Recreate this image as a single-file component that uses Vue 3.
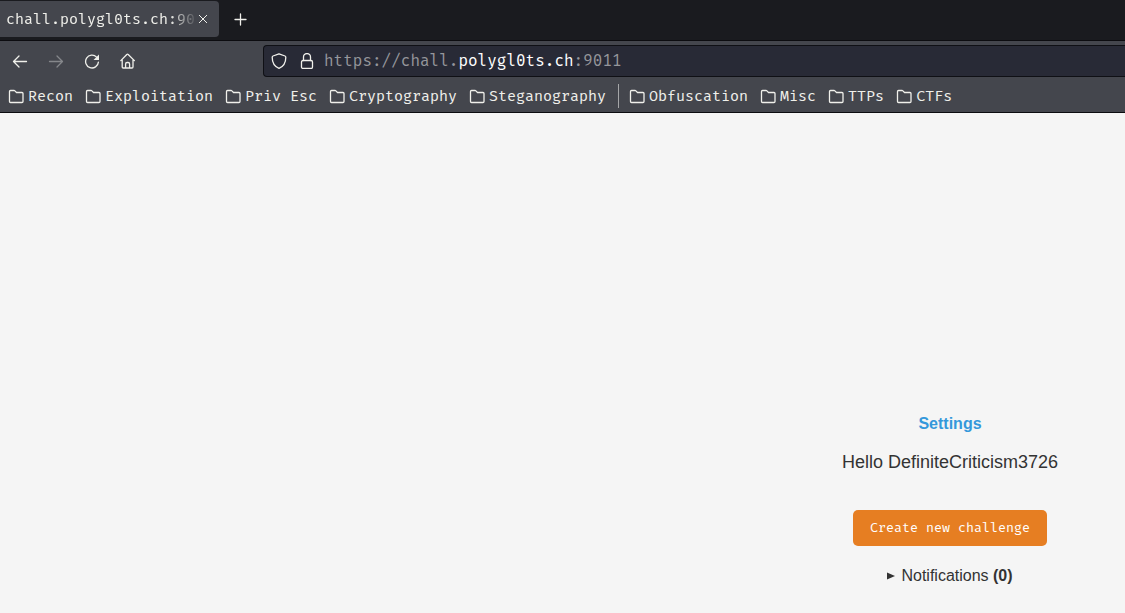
<script setup>
const before = ['Recon', 'Exploitation', 'Priv Esc', 'Cryptography', 'Steganography']
const after = ['Obfuscation', 'Misc', 'TTPs', 'CTFs']
const groups = [before, after]
</script>

<template>
  <div class="browser">
    <header class="chrome">
      <div class="tabs">
        <div class="tab">
          <span class="tab-title">chall.polygl0ts.ch:90</span>
          <button class="close" type="button" aria-label="Close tab">
            <svg width="10" height="10" viewBox="0 0 10 10"><path d="M1 1l8 8M9 1L1 9" /></svg>
          </button>
        </div>
        <button class="icon-button" type="button" aria-label="New tab">
          <svg width="14" height="14" viewBox="0 0 14 14"><path class="bold" d="M6.500 2v11M1 7.500h11" /></svg>
        </button>
      </div>

      <div class="toolbar">
        <nav class="controls" aria-label="Navigation">
          <button class="icon-button" type="button" aria-label="Back">
            <svg width="16" height="16" viewBox="0 0 16 16"><path class="bold" d="M14.500 8.500H1.500M7 3L1.500 8.500L7 14" /></svg>
          </button>
          <button class="icon-button" type="button" aria-label="Forward" disabled>
            <svg width="16" height="16" viewBox="0 0 16 16"><path class="bold" d="M1.500 8.500h13M9 3L14.500 8.500L9 14" /></svg>
          </button>
          <button class="icon-button" type="button" aria-label="Reload">
            <svg width="16" height="16" viewBox="0 0 16 16">
              <path class="bold" d="M12.600 4.100A6.400 6.400 0 1 0 14.400 9.100" />
              <path class="solid" d="M15 1.500v5.500H9.500z" />
            </svg>
          </button>
          <button class="icon-button" type="button" aria-label="Home">
            <svg width="16" height="16" viewBox="0 0 16 16">
              <path class="bold" d="M.8 7.600L6.800 1.500q.7-.6 1.400 0L14.400 7.600M2.200 6.800V14q0 1 1 1h8.800q1 0 1-1V6.800M5.600 15v-4q0-1.500 1.500-1.500h1q1.500 0 1.500 1.500v4" />
            </svg>
          </button>
        </nav>
        <div class="address">
          <div class="identity">
            <svg width="16" height="16" viewBox="0 0 16 16">
              <path class="bold" d="M8 .8L14 3q.8.300.8 1.200C14.800 9.500 12.500 13.500 8 15.300C3.500 13.500 1.200 9.500 1.200 4.200Q1.200 3.300 2 3z" />
            </svg>
            <svg width="16" height="16" viewBox="0 0 16 16">
              <rect class="bold" x="2.500" y="7.500" width="11" height="8" rx="1.500" />
              <path class="bold" d="M4.500 7.500V4a3.500 3.500 0 0 1 7 0v3.500" />
            </svg>
          </div>
          <a class="url" href="https://chall.polygl0ts.ch:9011">https://chall.<span class="domain">polygl0ts.ch</span>:9011</a>
        </div>
      </div>

      <nav class="bookmarks" aria-label="Bookmarks">
        <div v-for="(group, i) in groups" :key="i" class="group">
          <button v-for="name in group" :key="name" class="bookmark" type="button">
            <svg width="16" height="16" viewBox="0 0 16 16">
              <path class="bold" d="M1.500 3.500q0-1 1-1h3.500q.5 0 .9.400L8.500 4.500h5.500q1 0 1 1v8q0 1-1 1H2.500q-1 0-1-1z" />
            </svg>
            {{ name }}
          </button>
        </div>
      </nav>
    </header>

    <main class="page">
      <section class="panel">
        <a class="settings" href="#settings">Settings</a>
        <p class="hello">Hello DefiniteCriticism3726</p>
        <button class="create" type="button">Create new challenge</button>
        <button class="notifications" type="button" aria-expanded="false">
          <svg width="8" height="8" viewBox="0 0 8 8"><path class="solid" d="M0 .5L8 4L0 7.500z" /></svg>
          <span>Notifications <b>(0)</b></span>
        </button>
      </section>
    </main>
  </div>
</template>

<style>
body {
  margin: 0;
  background: #f5f5f5;
}
</style>

<style scoped>
.browser {
  display: flex;
  flex-direction: column;
  min-height: 100vh;
  overflow: hidden;
  font-family: "Liberation Sans", Arial, sans-serif;
  color: #333;
}
button {
  border: 0;
  padding: 0;
  background: none;
  color: inherit;
  font: inherit;
}
svg {
  display: block;
  flex: none;
  fill: none;
  stroke: currentColor;
}
.bold {
  stroke-width: 1.3;
  stroke-linecap: round;
  stroke-linejoin: round;
}
.solid {
  fill: currentColor;
  stroke: none;
}
.chrome {
  background: #44464d;
  border-bottom: 1px solid #0c0c10;
  color: #f0f0eb;
  font-family: "Fira Mono", "DejaVu Sans Mono", monospace;
  font-size: 15px;
}
.tabs {
  display: flex;
  align-items: center;
  gap: 4px;
  height: 38px;
  padding-bottom: 2px;
  border-bottom: 1px solid #0c0c10;
  background: #1a1b1f;
}
.tab {
  display: flex;
  align-items: center;
  box-sizing: border-box;
  width: 219px;
  height: 36px;
  padding: 0 11px 0 6px;
  border-radius: 0 4px 4px 0;
  background: #44464d;
}
.tab-title {
  flex: 1;
  white-space: nowrap;
  mask-image: linear-gradient(to left, transparent, #000 28px);
}
.close {
  display: flex;
}
.icon-button {
  display: flex;
  align-items: center;
  justify-content: center;
  width: 36px;
  height: 32px;
}
.icon-button:disabled {
  color: #85878b;
}
.toolbar {
  display: flex;
  align-items: center;
  gap: 117px;
  height: 40px;
  padding-left: 2px;
}
.controls {
  display: flex;
}
.address {
  display: flex;
  flex: 1;
  align-items: center;
  gap: 9px;
  height: 30px;
  padding-left: 7px;
  border: 1px solid #0f1015;
  border-right: 0;
  border-radius: 4px 0 0 4px;
  background: #282a36;
}
.identity {
  display: flex;
  gap: 12px;
}
.url {
  padding-bottom: 2px;
  color: #95969b;
  font-size: 16px;
  text-decoration: none;
  white-space: nowrap;
}
.domain {
  color: #fff;
}
.bookmarks {
  display: flex;
  align-items: center;
  height: 29px;
  padding: 0 8px 2px;
}
.group {
  display: flex;
  align-items: center;
  gap: 12px;
  height: 24px;
}
.group + .group {
  margin-left: 12px;
  padding-left: 10px;
  border-left: 1px solid #a5a6a8;
}
.bookmark {
  display: flex;
  align-items: center;
  gap: 4px;
  white-space: nowrap;
}
.page {
  display: flex;
  flex: 1;
  align-items: flex-end;
  justify-content: flex-end;
  background: #f5f5f5;
}
.panel {
  display: flex;
  flex-direction: column;
  align-items: center;
  width: 350px;
  padding-bottom: 27px;
}
.settings {
  color: #3498db;
  font-size: 16px;
  font-weight: bold;
  line-height: 20px;
  text-decoration: none;
}
.hello {
  margin: 18px 0 38px;
  font-size: 18px;
  line-height: 20px;
}
.create {
  height: 36px;
  padding: 0 17px;
  border-radius: 5px;
  background: #e67e22;
  color: #fff;
  font-family: "Fira Code", "Fira Mono", "DejaVu Sans Mono", monospace;
  font-size: 13px;
}
.notifications {
  display: flex;
  align-items: center;
  gap: 6px;
  margin-top: 20px;
  font-size: 16px;
  line-height: 20px;
}
</style>
